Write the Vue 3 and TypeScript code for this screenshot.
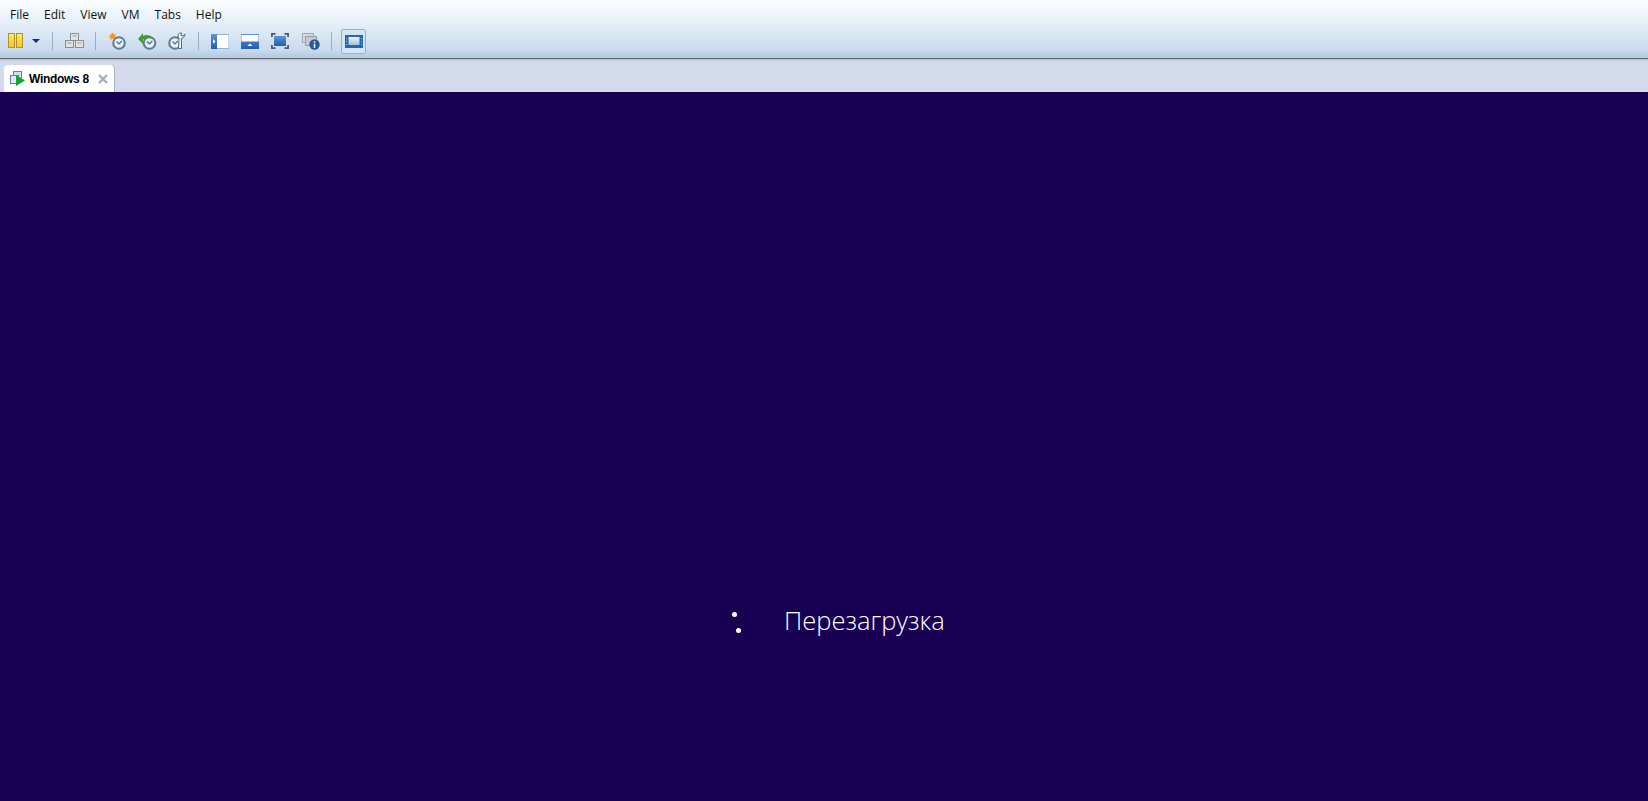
<script setup lang="ts">
const menus: string[] = ['File', 'Edit', 'View', 'VM', 'Tabs', 'Help']
</script>

<template>
  <div class="app">
    <header class="top">
      <nav class="menu">
        <span v-for="m in menus" :key="m" class="menu-item">{{ m }}</span>
      </nav>
      <div class="tools">
        <svg class="ic pause" width="15" height="16" viewBox="0 0 15 16">
          <defs>
            <linearGradient id="pz" x1="0" y1="0" x2="0" y2="1"><stop offset="0" stop-color="#ffe66e"/><stop offset="1" stop-color="#f7c51f"/></linearGradient>
            <linearGradient id="bl" x1="0" y1="0" x2="0" y2="1"><stop offset="0" stop-color="#5d96d6"/><stop offset="1" stop-color="#1f5fae"/></linearGradient>
            <linearGradient id="win" x1="0" y1="0" x2="0" y2="1"><stop offset="0" stop-color="#f4f4e8"/><stop offset="1" stop-color="#9cc0e4"/></linearGradient>
          </defs>
          <rect x=".5" y=".5" width="6" height="14" fill="url(#pz)" stroke="#b0912a"/>
          <rect x="8.500" y=".5" width="6" height="14" fill="url(#pz)" stroke="#b0912a"/>
        </svg>
        <svg class="ic drop" width="8" height="4" viewBox="0 0 8 4"><path d="M0 0h8L4 4z" fill="#23238e"/></svg>
        <i class="sep s1"></i>
        <svg class="ic snap" width="19" height="16" viewBox="0 0 19 16">
          <g fill="#e2e2e2" stroke="#8f8f8f">
            <rect x="5.500" y=".5" width="8" height="7"/>
            <rect x=".5" y="7.500" width="8" height="7"/>
            <rect x="10.500" y="7.500" width="8" height="7"/>
          </g>
          <path d="M7.500 3h4M2.500 10h4M12.500 10h4" stroke="#9a9a9a"/>
        </svg>
        <i class="sep s2"></i>
        <svg class="ic c1" width="18" height="18" viewBox="0 0 18 18">
          <circle cx="11" cy="11" r="5.800" fill="#e6eff5" stroke="#5a7c94" stroke-width="2"/>
          <path d="M8.500 9.500l2.500 2.500 2.800-3" fill="none" stroke="#4a6d85" stroke-width="1.200"/>
          <path d="M4.500 0l1 2.500L8 1.500 6.800 4l2.200 1-2.500 1-.4 2.500L4.500 6.500 2 8l.7-2.500L0 4.500l2.700-.7L2 1.200l2 1.300z" fill="#f39320"/>
        </svg>
        <svg class="ic c2" width="19" height="18" viewBox="0 0 19 18">
          <circle cx="11.500" cy="11" r="5.800" fill="#e6eff5" stroke="#5a7c94" stroke-width="2"/>
          <path d="M9 9.500l2.500 2.500 2.800-3" fill="none" stroke="#4a6d85" stroke-width="1.200"/>
          <path d="M0 7l5-6v3c4-2 8-1 10 3-3-1.500-6-1.500-10 .5v4.500z" fill="#3f9a34"/>
        </svg>
        <svg class="ic c3" width="18" height="18" viewBox="0 0 18 18">
          <circle cx="7" cy="11" r="5.800" fill="#e6eff5" stroke="#5a7c94" stroke-width="2"/>
          <path d="M4.500 9.500l2.500 2.500 2.800-3" fill="none" stroke="#4a6d85" stroke-width="1.200"/>
          <path d="M11.500 1C10 1.800 9.500 4 10.500 6l.5.500-.5 10h3L13.500 6.500c2-.5 3.500-2 3.500-4.500l-2 2-2-.5.500-2.500z" fill="#eef2f5" stroke="#4f6e85"/>
        </svg>
        <i class="sep s3"></i>
        <svg class="ic v1" width="18" height="15" viewBox="0 0 18 15">
          <rect width="18" height="15" fill="#8fb2d8"/><rect width="6" height="15" fill="url(#bl)"/><rect x="6" y="1" width="11.500" height="13" fill="#fff"/>
          <path d="M2 5l2.500 2.500L2 10z" fill="#fff"/>
        </svg>
        <svg class="ic v2" width="18" height="15" viewBox="0 0 18 15">
          <rect width="18" height="15" fill="url(#bl)"/><rect x=".5" y="1" width="17" height="6.500" fill="#fff"/>
          <path d="M6.500 12L9 9.500l2.500 2.500z" fill="#fff"/>
        </svg>
        <svg class="ic v3" width="18" height="16" viewBox="0 0 18 16">
          <rect x="3" y="3" width="12" height="10" fill="url(#bl)"/>
          <path d="M.9 4V.9H4.500M13.500.9h3.600V4M.9 12v3.100h3.600M13.500 15.100h3.600V12" fill="none" stroke="#4a5c6b" stroke-width="1.800"/>
        </svg>
        <svg class="ic v4" width="18" height="17" viewBox="0 0 18 17">
          <rect x=".5" y=".5" width="11" height="9" fill="#d5d8dc" stroke="#a5a9ae"/>
          <rect x="3.500" y="3.500" width="11" height="9" fill="#c6cad0" stroke="#9a9ea5"/>
          <circle cx="12.500" cy="11.500" r="5.200" fill="#1f5a9c"/>
          <path d="M12.500 8.300v1.400M12.500 10.700v4" stroke="#fff" stroke-width="1.600"/>
        </svg>
        <i class="sep s4"></i>
        <span class="active-btn">
          <svg width="18" height="13" viewBox="0 0 18 13">
            <rect width="18" height="13" fill="#2566b4"/>
            <rect x="3.500" y="2" width="11" height="8" fill="url(#win)"/>
            <path d="M1 3.500h1M1 6.500h1M1 9.500h1M16 3.500h1M16 6.500h1M16 9.500h1" stroke="#9cc0e4"/>
          </svg>
        </span>
      </div>
    </header>

    <div class="tabs">
      <div class="tab">
        <svg class="tab-ic" width="16" height="15" viewBox="0 0 16 15">
          <rect x="3.500" y=".5" width="8" height="7" fill="#cfe0ef" stroke="#5c86a8"/>
          <rect x=".5" y="4.500" width="8" height="8" fill="#dce9f4" stroke="#5c86a8"/>
          <path d="M6 4l9 5.500L6 15z" fill="#17a52f"/>
        </svg>
        <b class="tab-title">Windows 8</b>
        <svg class="close" width="10" height="10" viewBox="0 0 10 10"><path d="M1 1l8 8M9 1l-8 8" stroke="#9fb0bf" stroke-width="2.400"/></svg>
      </div>
    </div>

    <main class="screen">
      <div class="status">
        <span class="spinner"><i class="dot d1"></i><i class="dot d2"></i></span>
        <span class="label">Перезагрузка</span>
      </div>
    </main>
  </div>
</template>

<style>
html, body { margin: 0; background: #180052; overflow: hidden; }
</style>

<style scoped>
.app {
  width: 1648px;
  height: 801px;
  display: flex;
  flex-direction: column;
  font-family: "Open Sans", "Liberation Sans", sans-serif;
}
.top {
  height: 58px;
  box-sizing: content-box;
  border-bottom: 1px solid #62676c;
  background: linear-gradient(#fafdff 0, #e9f1f9 20px, #c9dbee 50px, #b4cbe4 57px);
  flex: none;
}
.menu {
  display: flex;
  height: 30px;
  align-items: center;
  padding-left: 10px;
  gap: 15px;
  font-size: 12px;
  color: #111;
}
.menu-item { line-height: 30px; }
.tools { height: 22px; display: flex; align-items: center; }
.ic { flex: none; }
.pause { margin-left: 8px; }
.drop { margin-left: 9px; }
.sep { width: 1px; height: 18px; background: #92aec8; flex: none; }
.s1 { margin-left: 12px; }
.snap { margin-left: 12px; }
.s2 { margin-left: 11px; }
.c1 { margin-left: 12px; }
.c2 { margin-left: 12px; }
.c3 { margin-left: 11px; }
.s3 { margin-left: 12px; }
.v1 { margin-left: 12px; }
.v2 { margin-left: 12px; }
.v3 { margin-left: 12px; }
.v4 { margin-left: 13px; }
.s4 { margin-left: 11px; }
.active-btn {
  margin-left: 9px;
  width: 23px;
  height: 23px;
  border: 1px solid #8fb2d2;
  border-radius: 2px;
  background: #d3e4f6;
  display: flex;
  align-items: center;
  justify-content: center;
  flex: none;
}
.tabs {
  height: 33px;
  background: linear-gradient(#aab4c6 0, #d3daec 2px);
  flex: none;
  display: flex;
  align-items: flex-end;
  padding-left: 4px;
}
.tab {
  width: 110px;
  height: 27px;
  background: #fff;
  border-radius: 4px 4px 0 0;
  box-shadow: 1px 0 0 #aab4c8;
  display: flex;
  align-items: center;
  box-sizing: border-box;
  padding-left: 6px;
}
.tab-ic { flex: none; }
.tab-title {
  margin-left: 3px;
  font-family: "Liberation Sans", Arial, sans-serif;
  font-size: 12px;
  font-weight: 700;
  letter-spacing: -0.3px;
  color: #000;
}
.close { margin-left: 9px; flex: none; }
.screen {
  flex: 1;
  background: #180052;
  display: flex;
  align-items: flex-start;
  padding-top: 505px;
  padding-left: 726px;
}
.status { display: flex; align-items: center; height: 46px; }
.spinner { position: relative; width: 58px; height: 46px; flex: none; }
.dot { position: absolute; width: 5px; height: 5px; border-radius: 50%; background: #fff; }
.d1 { left: 6px; top: 15px; }
.d2 { left: 10px; top: 31px; }
.label {
  font-family: "Open Sans", sans-serif;
  font-weight: 300;
  font-size: 25.500px;
  color: #fff;
  line-height: 46px;
}
</style>
